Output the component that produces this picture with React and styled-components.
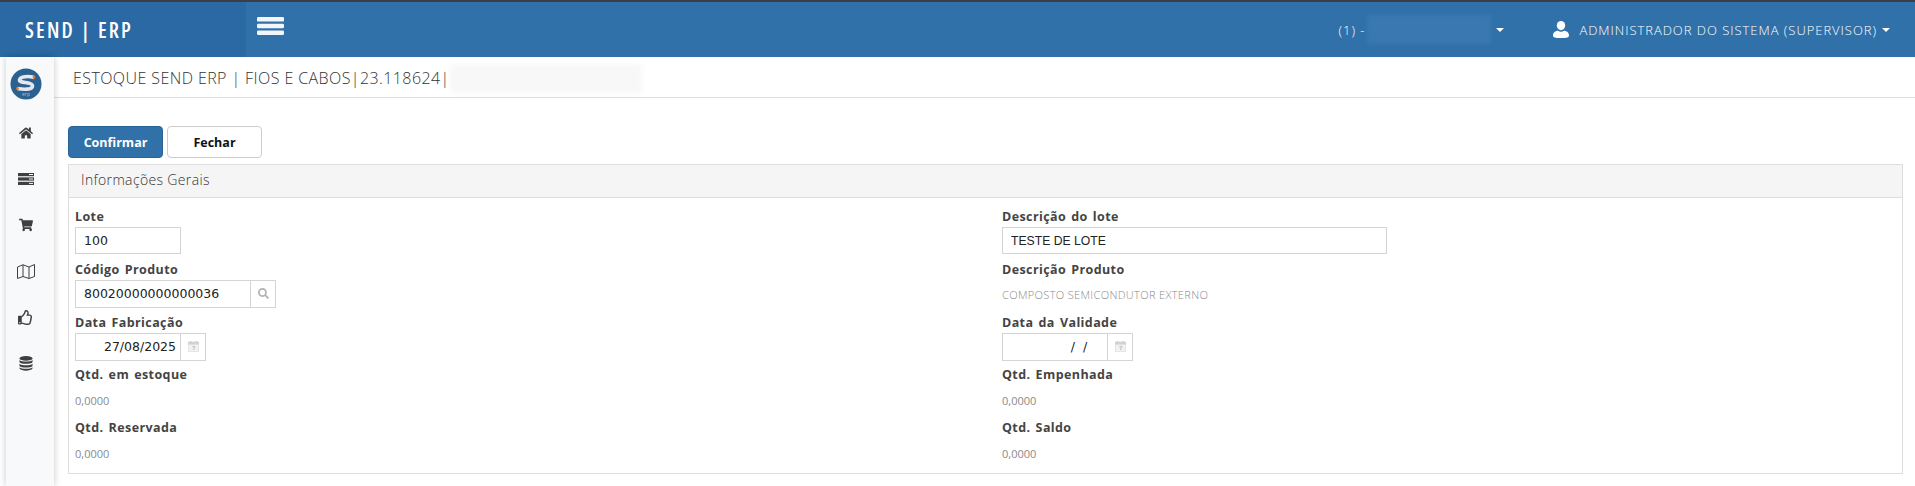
import React from 'react';
import styled, { createGlobalStyle } from 'styled-components';
import { FaHome, FaShoppingCart, FaRegThumbsUp, FaSearch } from 'react-icons/fa';

const GlobalStyle = createGlobalStyle`
  html, body {
    margin: 0;
    padding: 0;
    background: #fff;
    font-family: "Open Sans", "Liberation Sans", sans-serif;
  }
  * { box-sizing: border-box; }
`;

const Page = styled.div`
  width: 1915px;
  height: 486px;
  display: flex;
  flex-direction: column;
  overflow: hidden;
`;

const TopBar = styled.header`
  height: 57px;
  flex: none;
  display: flex;
  align-items: stretch;
  background: #3071a9;
  border-top: 2px solid #3b3f45;
  color: #fff;
`;

const Brand = styled.div`
  width: 246px;
  padding-left: 25px;
  display: flex;
  align-items: center;
  background: #2a69a3;
  font-size: 21px;
  font-weight: 600;
  font-stretch: 75%;
  letter-spacing: 2.2px;
  white-space: pre;
`;

const MenuButton = styled.button`
  width: 27px;
  height: 18px;
  margin: 15px 0 0 11px;
  padding: 0;
  border: 0;
  background: none;
  display: block;
`;

const TopRight = styled.div`
  margin-left: auto;
  padding-right: 25px;
  display: flex;
  align-items: center;
  font-size: 13px;
  font-weight: 300;
  letter-spacing: 0.97px;
`;

const Company = styled.span`
  display: flex;
  align-items: center;
  margin-right: 49px;
  gap: 2px;
`;

const BlurBlock = styled.span`
  display: block;
  width: ${props => props.width}px;
  height: 29px;
  background: ${props => props.color};
  filter: blur(2px);
`;

const Caret = styled.span`
  width: 0;
  height: 0;
  margin-left: ${props => props.left || 5}px;
  border-left: 4px solid transparent;
  border-right: 4px solid transparent;
  border-top: 4px solid #fff;
`;

const UserName = styled.span`
  margin-left: 10px;
`;

const Body = styled.div`
  flex: 1;
  display: flex;
  min-height: 0;
`;

const Sidebar = styled.nav`
  width: 48px;
  margin-left: 6px;
  flex: none;
  display: flex;
  flex-direction: column;
  align-items: center;
  background: #f8f9fb;
  box-shadow: 0 0 7px rgba(0, 0, 0, 0.22);
  padding-top: 11px;
  position: relative;
`;

const LogoMark = styled.svg`
  display: block;
  width: 32px;
  height: 32px;
  margin-left: -9px;
  margin-bottom: 10px;
`;

const SideItem = styled.a`
  width: 100%;
  height: 46px;
  padding-right: 9px;
  display: flex;
  align-items: center;
  justify-content: center;
  color: #3f3f3f;
  font-size: ${props => props.size || 15}px;
`;

const Main = styled.main`
  flex: 1;
  min-width: 0;
`;

const TitleBar = styled.div`
  height: 41px;
  padding: 2px 0 0 19px;
  display: flex;
  align-items: center;
  border-bottom: 1px solid #dcdcdc;
  font-size: 16px;
  font-weight: 300;
  letter-spacing: 0.42px;
  color: #333;
`;

const Content = styled.div`
  padding: 28px 12px 0 14px;
`;

const Toolbar = styled.div`
  display: flex;
  gap: 4px;
  margin-bottom: 6px;
`;

const Button = styled.button`
  width: ${props => props.width}px;
  height: 32px;
  padding: 0;
  border-radius: 4px;
  border: 1px solid ${props => (props.primary ? '#2a6496' : '#ccc')};
  background: ${props => (props.primary ? '#3071a9' : '#fff')};
  color: ${props => (props.primary ? '#fff' : '#111')};
  font-family: "Open Sans", sans-serif;
  font-size: 12.5px;
  font-weight: 700;
`;

const Panel = styled.section`
  height: 310px;
  border: 1px solid #ddd;
`;

const PanelHeading = styled.div`
  height: 33px;
  padding: 0 0 3px 12px;
  display: flex;
  align-items: center;
  background: #f5f5f5;
  border-bottom: 1px solid #ddd;
  font-size: 14px;
  font-weight: 300;
  letter-spacing: 0.35px;
  color: #333;
`;

const FormGrid = styled.div`
  padding: 10px 0 0 6px;
  display: grid;
  grid-template-columns: 927px 1fr;
  grid-auto-rows: 52.75px;
`;

const Field = styled.div`
  display: flex;
  flex-direction: column;
  align-items: flex-start;
`;

const Label = styled.label`
  height: 19px;
  line-height: 18px;
  font-size: 12.5px;
  font-weight: 700;
  letter-spacing: 0.4px;
  word-spacing: 1.5px;
  color: #444;
`;

const InputGroup = styled.div`
  display: flex;
  height: 28px;
`;

const TextInput = styled.input`
  width: ${props => props.width}px;
  height: ${props => props.tall || 27}px;
  padding: 0 ${props => (props.right ? 4 : 8)}px 0 8px;
  border: 1px solid #d4d4d4;
  border-radius: 0;
  outline: none;
  background: #fff;
  color: #222;
  font-family: ${props => (props.plain ? '"Liberation Sans"' : '"DejaVu Sans"')}, sans-serif;
  font-size: ${props => (props.plain ? 12.2 : 12.5)}px;
  text-align: ${props => (props.right ? 'right' : 'left')};
`;

const Addon = styled.span`
  width: ${props => props.width}px;
  height: 28px;
  margin-left: -1px;
  display: flex;
  align-items: center;
  justify-content: center;
  border: 1px solid #d4d4d4;
  color: #b4b4b4;
  font-size: 11px;
`;

const Value = styled.div`
  margin-top: ${props => props.top || 9}px;
  font-size: 11px;
  font-weight: ${props => props.weight || 400};
  letter-spacing: ${props => props.spacing || 0}px;
  line-height: 14px;
  color: #8a8a8a;
`;

const Logo = () => (
  <LogoMark viewBox="0 0 32 32">
    <circle cx="16" cy="16" r="15.5" fill="#2b6190" />
    <path
      d="M24 9.5 C19 8 10 8 9.5 12 C9 15.5 22.5 13.5 22.5 18 C22.5 22 13 21.5 7.5 20.5"
      fill="none"
      stroke="#e4e8ee"
      strokeWidth="3.6"
    />
    <circle cx="24" cy="9.5" r="1.4" fill="#e8792b" />
    <circle cx="7.5" cy="20.5" r="1.4" fill="#e8792b" />
    <text x="16" y="28" fontSize="5" textAnchor="middle" fill="#a9c2d8" fontFamily="Open Sans">
      erp
    </text>
  </LogoMark>
);

const Bars = () => (
  <svg width="27" height="18" viewBox="0 0 27 18" style={{ display: 'block' }}>
    <rect x="0" y="0" width="27" height="4.6" rx="1.2" fill="#f2f6fa" />
    <rect x="0" y="6.7" width="27" height="4.6" rx="1.2" fill="#f2f6fa" />
    <rect x="0" y="13.4" width="27" height="4.6" rx="1.2" fill="#f2f6fa" />
  </svg>
);

const UserIcon = () => (
  <svg width="16" height="17" viewBox="0 0 16 17">
    <ellipse cx="8" cy="4.6" rx="4.2" ry="4.6" fill="#fff" />
    <path d="M0 14.5 C0 11 3 10 5 9.8 C6.5 11 9.5 11 11 9.8 C13 10 16 11 16 14.5 C16 16.4 14 17 8 17 C2 17 0 16.4 0 14.5 Z" fill="#fff" />
  </svg>
);

const CalendarIcon = () => (
  <svg width="11" height="11" viewBox="0 0 11 11">
    <rect x="0" y="1" width="11" height="10" fill="#f1f1f1" stroke="#d8d8d8" strokeWidth="0.8" />
    <rect x="0" y="1" width="11" height="2.6" fill="#d2d2d2" />
    <rect x="2" y="0" width="1.4" height="2" fill="#d2d2d2" />
    <rect x="7.6" y="0" width="1.4" height="2" fill="#d2d2d2" />
    <path d="M4.4 5.6 H6.8 L5.4 9" fill="none" stroke="#b8b8b8" strokeWidth="0.9" />
  </svg>
);

const StackIcon = () => (
  <svg width="16" height="12" viewBox="0 0 16 12">
    <rect x="0" y="0" width="16" height="3.2" fill="#3f3f3f" />
    <rect x="0" y="4.4" width="16" height="3.2" fill="#3f3f3f" />
    <rect x="0" y="8.8" width="16" height="3.2" fill="#3f3f3f" />
    <rect x="11" y="1" width="4" height="1" fill="#f8f9fb" />
    <rect x="11" y="5.5" width="4" height="1" fill="#f8f9fb" />
    <rect x="11" y="9.9" width="4" height="1" fill="#f8f9fb" />
  </svg>
);

const MapIcon = () => (
  <svg width="18" height="15" viewBox="0 0 18 15">
    <path
      d="M.5 3 L6 .8 L12 3 L17.5 .5 V12.5 L12 14.5 L6 12.5 L.5 14.5 Z M6 .8 V12.5 M12 3 V14.5"
      fill="none"
      stroke="#3f3f3f"
      strokeWidth="1"
    />
  </svg>
);

const DatabaseIcon = () => (
  <svg width="14" height="15" viewBox="0 0 14 15">
    <ellipse cx="7" cy="2.4" rx="6.5" ry="2.4" fill="#3f3f3f" />
    <path d="M.5 4 C2 6 12 6 13.5 4 V6.2 C12 8.2 2 8.2 .5 6.2 Z" fill="#3f3f3f" />
    <path d="M.5 7.8 C2 9.8 12 9.8 13.5 7.8 V10 C12 12 2 12 .5 10 Z" fill="#3f3f3f" />
    <path d="M.5 11.2 C2 13.2 12 13.2 13.5 11.2 V12.6 C12 15.4 2 15.4 .5 12.6 Z" fill="#3f3f3f" />
  </svg>
);

const DateInput = ({ value }) => (
  <InputGroup>
    <TextInput width={106} tall={28} right readOnly value={value} />
    <Addon width={26}>
      <CalendarIcon />
    </Addon>
  </InputGroup>
);

export default function App() {
  return (
    <Page>
      <GlobalStyle />
      <TopBar>
        <Brand>SEND | ERP</Brand>
        <MenuButton aria-label="menu">
          <Bars />
        </MenuButton>
        <TopRight>
          <Company>
            (1) -
            <BlurBlock width={124} color="#3a78b0" />
            <Caret left={3} />
          </Company>
          <UserIcon />
          <UserName>ADMINISTRADOR DO SISTEMA (SUPERVISOR)</UserName>
          <Caret />
        </TopRight>
      </TopBar>
      <Body>
        <Sidebar>
          <Logo />
          <SideItem size={14}><FaHome /></SideItem>
          <SideItem><StackIcon /></SideItem>
          <SideItem size={14}><FaShoppingCart /></SideItem>
          <SideItem><MapIcon /></SideItem>
          <SideItem size={15}><FaRegThumbsUp /></SideItem>
          <SideItem><DatabaseIcon /></SideItem>
        </Sidebar>
        <Main>
          <TitleBar>
            ESTOQUE SEND ERP | FIOS E CABOS|23.118624|
            <BlurBlock width={192} color="#f8f8f8" />
          </TitleBar>
          <Content>
            <Toolbar>
              <Button primary width={95}>Confirmar</Button>
              <Button width={95}>Fechar</Button>
            </Toolbar>
            <Panel>
              <PanelHeading>Informações Gerais</PanelHeading>
              <FormGrid>
                <Field>
                  <Label>Lote</Label>
                  <TextInput width={106} readOnly value="100" />
                </Field>
                <Field>
                  <Label>Descrição do lote</Label>
                  <TextInput width={385} plain readOnly value="TESTE DE LOTE" />
                </Field>
                <Field>
                  <Label>Código Produto</Label>
                  <InputGroup>
                    <TextInput width={176} tall={28} readOnly value="80020000000000036" />
                    <Addon width={26}><FaSearch /></Addon>
                  </InputGroup>
                </Field>
                <Field>
                  <Label>Descrição Produto</Label>
                  <Value top={8} weight={300} spacing={0.35}>COMPOSTO SEMICONDUTOR EXTERNO</Value>
                </Field>
                <Field>
                  <Label>Data Fabricação</Label>
                  <DateInput value="27/08/2025" />
                </Field>
                <Field>
                  <Label>Data da Validade</Label>
                  <DateInput value="/  /    " />
                </Field>
                <Field>
                  <Label>Qtd. em estoque</Label>
                  <Value>0,0000</Value>
                </Field>
                <Field>
                  <Label>Qtd. Empenhada</Label>
                  <Value>0,0000</Value>
                </Field>
                <Field>
                  <Label>Qtd. Reservada</Label>
                  <Value>0,0000</Value>
                </Field>
                <Field>
                  <Label>Qtd. Saldo</Label>
                  <Value>0,0000</Value>
                </Field>
              </FormGrid>
            </Panel>
          </Content>
        </Main>
      </Body>
    </Page>
  );
}
